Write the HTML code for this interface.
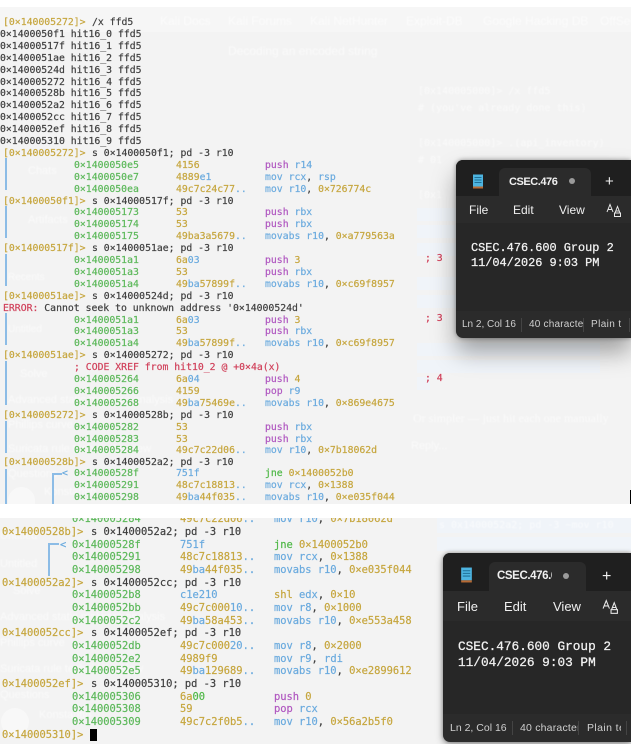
<!DOCTYPE html>
<html><head><meta charset="utf-8"><style>
html,body{margin:0;padding:0}
body{width:631px;height:744px;overflow:hidden;background:#fff;position:relative;font-family:"DejaVu Sans Mono","Liberation Mono",monospace}
#bg{position:absolute;left:0;top:7px;width:631px;height:737px;background:#f3f3f3}
#top{position:absolute;left:0;top:7px;width:631px;height:25px;background:#f6f6f6}
#band{position:absolute;left:0;top:504px;width:631px;height:14px;background:#fff}
.sec{position:absolute;left:0;width:631px;overflow:hidden;filter:blur(.3px);-webkit-text-stroke:.2px}
#s1{top:2px;height:502px;font-size:9.8px}
#s2{top:518px;height:226px;font-size:10.4px}
.l{position:absolute;left:0;width:631px;height:12px;line-height:12px;white-space:pre;color:#3f3f3f}
.l i{position:absolute;font-style:normal;top:0}
.p{color:#c6a63e}
#s1 .p{left:3px}#s1 .c{left:92px}#s1 .a{left:74px}#s1 .h{left:176px}#s1 .m{left:265px}
#s2 .p{left:2px}#s2 .c{left:91px}#s2 .a{left:72px}#s2 .h{left:180px}#s2 .m{left:274px}
.a{color:#5cb85a}.h{color:#c6a63e}.b{color:#6aaade}.u{color:#b058c0}.y{color:#c6a63e}.g{color:#50b848}.w{color:#3f3f3f}.r{color:#d0405a}
.bar{position:absolute;background:#8cbce6}
.gh{position:absolute;color:#fff;opacity:.6;white-space:pre;filter:blur(.5px);font-family:"Liberation Sans",sans-serif;font-size:11px}
.mono{font-family:"DejaVu Sans Mono",monospace;font-size:10px}
.row{position:absolute;background:#f0f4f9}
.np{position:absolute;background:#2b2b2b;color:#f0f0f0;font-family:"Liberation Sans",sans-serif;overflow:hidden;border-radius:7px 0 0 7px}
.np div,.np span,.np svg{position:absolute;white-space:pre}
.np div span{position:static}
.tb{left:0;top:0;right:0;background:#1f1f1f}
.tab{background:#2b2b2b;border-radius:6px 6px 0 0}
.ta{left:0;right:0;background:#272727}
.t{font-family:"Liberation Mono",monospace;color:#f2f2f2;-webkit-text-stroke:.25px #f2f2f2}
.dv{width:1px;background:#444}
.st{color:#cfcfcf}
.clip{overflow:hidden}
</style></head><body>
<div id="bg"></div><div id="top"></div>

<div class="gh" style="left:160px;top:14px;font-size:12px">Kali Docs</div>
<div class="gh" style="left:228px;top:14px;font-size:12px">Kali Forums</div>
<div class="gh" style="left:310px;top:14px;font-size:12px">Kali NetHunter</div>
<div class="gh" style="left:406px;top:14px;font-size:12px">Exploit-DB</div>
<div class="gh" style="left:483px;top:14px;font-size:12px">Google Hacking DB</div>
<div class="gh" style="left:600px;top:14px;font-size:12px">OffSec</div>
<div class="gh" style="left:228px;top:44px;font-size:12px">Decoding an encoded string</div>
<div class="gh mono" style="left:418px;top:86px">[0x140005000]&gt; /x ffd5</div>
<div class="gh mono" style="left:418px;top:103px"># (you've already done this)</div>
<div class="gh mono" style="left:418px;top:138px">[0x140005000]&gt; .(api_inventory)</div>
<div class="gh mono" style="left:418px;top:155px"># 01</div>
<div class="gh mono" style="left:418px;top:190px">[0x1</div>
<div class="row" style="left:417px;top:208px;width:39px;height:13px"></div>
<div class="row" style="left:417px;top:225px;width:39px;height:13px"></div>
<div class="row" style="left:417px;top:243px;width:39px;height:13px"></div>
<div class="row" style="left:417px;top:277px;width:39px;height:13px"></div>
<div class="row" style="left:417px;top:295px;width:39px;height:13px"></div>
<div class="row" style="left:417px;top:343px;width:183px;height:13px"></div>
<div class="row" style="left:417px;top:360px;width:183px;height:13px"></div>
<div class="row" style="left:417px;top:377px;width:13px;height:13px"></div>
<div class="gh" style="left:413px;top:411px;font-family:'Liberation Serif',serif;font-size:12px">Or simpler — just hit each one manually</div>
<div class="gh" style="left:411px;top:440px;font-size:11px">Reply...</div>
<div class="row" style="left:437px;top:518px;width:194px;height:15px"></div>
<div class="row" style="left:437px;top:537px;width:194px;height:14px"></div>
<div class="gh mono" style="left:439px;top:520px">s 0x1400052a2; pd -3 ~mov r10</div>
<div class="gh" style="left:28px;top:165px;font-size:11px">Chats</div>
<div class="gh" style="left:28px;top:214px;font-size:11px">Artifacts</div>
<div class="gh" style="left:8px;top:272px;font-size:10px">Recents</div>
<div class="gh" style="left:8px;top:324px;font-size:10px">Untitled</div>
<div class="gh" style="left:20px;top:368px;font-size:11px">Solve</div>
<div class="gh" style="left:8px;top:394px;font-size:11px">Advanced static malware analysis</div>
<div class="gh" style="left:8px;top:419px;font-size:11px">Phillips curve</div>
<div class="gh" style="left:8px;top:443px;font-size:11px">Suricata rule technical review</div>
<div class="gh" style="left:8px;top:468px;font-size:11px">Questions</div>
<div style="position:absolute;left:8px;top:487px;width:27px;height:17px;background:#f8f8f8;border-radius:14px 14px 0 0"></div>
<div class="gh" style="left:44px;top:486px;font-size:11px">Konstantin</div>
<div class="gh" style="left:0;top:530px;font-size:11px">Untitled</div>
<div class="gh" style="left:0;top:558px;font-size:11px">Untitled</div>
<div class="gh" style="left:13px;top:585px;font-size:11px">Solve</div>
<div class="gh" style="left:0;top:611px;font-size:11px">Advanced static malware analysis</div>
<div class="gh" style="left:0;top:637px;font-size:11px">Phillips curve</div>
<div class="gh" style="left:0;top:663px;font-size:11px">Suricata rule technical review</div>
<div class="gh" style="left:0;top:689px;font-size:11px">Questions</div>
<div style="position:absolute;left:1px;top:708px;width:28px;height:28px;background:#f8f8f8;border-radius:50%"></div>
<div class="gh" style="left:39px;top:709px;font-size:11px">Konstantin</div>

<div class="sec" id="s1">
<div class="bar" style="left:5px;top:156px;width:2px;height:32px"></div>
<div class="bar" style="left:5px;top:204px;width:2px;height:32px"></div>
<div class="bar" style="left:5px;top:252px;width:2px;height:32px"></div>
<div class="bar" style="left:5px;top:311px;width:2px;height:32px"></div>
<div class="bar" style="left:5px;top:359px;width:2px;height:44px"></div>
<div class="bar" style="left:5px;top:419px;width:2px;height:32px"></div>
<div class="bar" style="left:5px;top:467px;width:2px;height:35px"></div>
<div class="bar" style="left:52px;top:471px;width:2px;height:31px"></div>
<div class="bar" style="left:52px;top:471px;width:10px;height:1.5px"></div>

<div class="l" style="top:15px"><i class="p">[0×140005272]&gt;</i><i class="c">/x ffd5</i></div>
<div class="l" style="top:26.9px">0×1400050f1 hit16_0 ffd5</div>
<div class="l" style="top:38.8px">0×14000517f hit16_1 ffd5</div>
<div class="l" style="top:50.7px">0×1400051ae hit16_2 ffd5</div>
<div class="l" style="top:62.6px">0×14000524d hit16_3 ffd5</div>
<div class="l" style="top:74.5px">0×140005272 hit16_4 ffd5</div>
<div class="l" style="top:86.4px">0×14000528b hit16_5 ffd5</div>
<div class="l" style="top:98.3px">0×1400052a2 hit16_6 ffd5</div>
<div class="l" style="top:110.2px">0×1400052cc hit16_7 ffd5</div>
<div class="l" style="top:122.1px">0×1400052ef hit16_8 ffd5</div>
<div class="l" style="top:134px">0×140005310 hit16_9 ffd5</div>
<div class="l" style="top:145.9px"><i class="p">[0×140005272]&gt;</i><i class="c">s 0×1400050f1; pd -3 r10</i></div>
<div class="l" style="top:157.8px"><i class="a">0×1400050e5</i><i class="h">4156</i><i class="m"><span class="u">push</span> <span class="b">r14</span></i></div>
<div class="l" style="top:169.7px"><i class="a">0×1400050e7</i><i class="h">4889<span class="b">e1</span></i><i class="m"><span class="b">mov rcx</span>, <span class="b">rsp</span></i></div>
<div class="l" style="top:181.6px"><i class="a">0×1400050ea</i><i class="h">49c7c24c77<span class="b">..</span></i><i class="m"><span class="b">mov r10</span>, <span class="y">0×726774c</span></i></div>
<div class="l" style="top:193.5px"><i class="p">[0×1400050f1]&gt;</i><i class="c">s 0×14000517f; pd -3 r10</i></div>
<div class="l" style="top:205.4px"><i class="a">0×140005173</i><i class="h">53</i><i class="m"><span class="u">push</span> <span class="b">rbx</span></i></div>
<div class="l" style="top:217.3px"><i class="a">0×140005174</i><i class="h">53</i><i class="m"><span class="u">push</span> <span class="b">rbx</span></i></div>
<div class="l" style="top:229.2px"><i class="a">0×140005175</i><i class="h">49ba3a5679<span class="b">..</span></i><i class="m"><span class="b">movabs r10</span>, <span class="y">0×a779563a</span></i></div>
<div class="l" style="top:241.1px"><i class="p">[0×14000517f]&gt;</i><i class="c">s 0×1400051ae; pd -3 r10</i></div>
<div class="l" style="top:253px"><i class="a">0×1400051a1</i><i class="h">6a<span class="b">03</span></i><i class="m"><span class="u">push</span> <span class="y">3</span></i></div>
<div class="l" style="top:264.9px"><i class="a">0×1400051a3</i><i class="h">53</i><i class="m"><span class="u">push</span> <span class="b">rbx</span></i></div>
<div class="l" style="top:276.8px"><i class="a">0×1400051a4</i><i class="h">49<span class="b">ba</span>57899f<span class="b">..</span></i><i class="m"><span class="b">movabs r10</span>, <span class="y">0×c69f8957</span></i></div>
<div class="l" style="top:288.7px"><i class="p">[0×1400051ae]&gt;</i><i class="c">s 0×14000524d; pd -3 r10</i></div>
<div class="l" style="top:300.6px"><i style="left:3px"><span class="r">ERROR:</span> Cannot seek to unknown address '0×14000524d'</i></div>
<div class="l" style="top:312.5px"><i class="a">0×1400051a1</i><i class="h">6a<span class="b">03</span></i><i class="m"><span class="u">push</span> <span class="y">3</span></i></div>
<div class="l" style="top:324.4px"><i class="a">0×1400051a3</i><i class="h">53</i><i class="m"><span class="u">push</span> <span class="b">rbx</span></i></div>
<div class="l" style="top:336.3px"><i class="a">0×1400051a4</i><i class="h">49<span class="b">ba</span>57899f<span class="b">..</span></i><i class="m"><span class="b">movabs r10</span>, <span class="y">0×c69f8957</span></i></div>
<div class="l" style="top:348.2px"><i class="p">[0×1400051ae]&gt;</i><i class="c">s 0×140005272; pd -3 r10</i></div>
<div class="l" style="top:360.1px"><i style="left:74px" class="r">; CODE XREF from hit10_2 @ +0×4a(x)</i></div>
<div class="l" style="top:372px"><i class="a">0×140005264</i><i class="h">6a<span class="b">04</span></i><i class="m"><span class="u">push</span> <span class="y">4</span></i></div>
<div class="l" style="top:383.9px"><i class="a">0×140005266</i><i class="h">4159</i><i class="m"><span class="u">pop</span> <span class="b">r9</span></i></div>
<div class="l" style="top:395.8px"><i class="a">0×140005268</i><i class="h">49<span class="b">ba</span>75469e<span class="b">..</span></i><i class="m"><span class="b">movabs r10</span>, <span class="y">0×869e4675</span></i></div>
<div class="l" style="top:407.7px"><i class="p">[0×140005272]&gt;</i><i class="c">s 0×14000528b; pd -3 r10</i></div>
<div class="l" style="top:419.6px"><i class="a">0×140005282</i><i class="h">53</i><i class="m"><span class="u">push</span> <span class="b">rbx</span></i></div>
<div class="l" style="top:431.5px"><i class="a">0×140005283</i><i class="h">53</i><i class="m"><span class="u">push</span> <span class="b">rbx</span></i></div>
<div class="l" style="top:443.4px"><i class="a">0×140005284</i><i class="h">49c7c22d06<span class="b">..</span></i><i class="m"><span class="b">mov r10</span>, <span class="y">0×7b18062d</span></i></div>
<div class="l" style="top:455.3px"><i class="p">[0×14000528b]&gt;</i><i class="c">s 0×1400052a2; pd -3 r10</i></div>
<div class="l" style="top:466.2px"><i style="left:62px" class="b">&lt;</i><i class="a">0×14000528f</i><i class="h"><span class="b">751f</span></i><i class="m"><span class="g">jne</span> <span class="y">0×1400052b0</span></i></div>
<div class="l" style="top:478.1px"><i class="a">0×140005291</i><i class="h">48c7c18813<span class="b">..</span></i><i class="m"><span class="b">mov rcx</span>, <span class="y">0×1388</span></i></div>
<div class="l" style="top:490px"><i class="a">0×140005298</i><i class="h">49<span class="b">ba</span>44f035<span class="b">..</span></i><i class="m"><span class="b">movabs r10</span>, <span class="y">0×e035f044</span></i></div>
</div>

<div class="sec" id="s2">
<div class="bar" style="left:48px;top:25px;width:2px;height:33px"></div>
<div class="bar" style="left:48px;top:25px;width:11px;height:1.5px"></div>
<div class="l" style="top:-5px"><i class="a">0×140005284</i><i class="h">49c7c22d06<span class="b">..</span></i><i class="m"><span class="b">mov r10</span>, <span class="y">0×7b18062d</span></i></div>
<div class="l" style="top:8px"><i class="p" style="left:2px">0×14000528b]&gt;</i><i class="c">s 0×1400052a2; pd -3 r10</i></div>
<div class="l" style="top:20.5px"><i style="left:60px" class="b">&lt;</i><i class="a">0×14000528f</i><i class="h"><span class="b">751f</span></i><i class="m"><span class="g">jne</span> <span class="y">0×1400052b0</span></i></div>
<div class="l" style="top:33.2px"><i class="a">0×140005291</i><i class="h">48c7c18813<span class="b">..</span></i><i class="m"><span class="b">mov rcx</span>, <span class="y">0×1388</span></i></div>
<div class="l" style="top:45.9px"><i class="a">0×140005298</i><i class="h">49<span class="b">ba</span>44f035<span class="b">..</span></i><i class="m"><span class="b">movabs r10</span>, <span class="y">0×e035f044</span></i></div>
<div class="l" style="top:58.6px"><i class="p">0×1400052a2]&gt;</i><i class="c">s 0×1400052cc; pd -3 r10</i></div>
<div class="l" style="top:71.3px"><i class="a">0×1400052b8</i><i class="h"><span class="b">c1e210</span></i><i class="m"><span class="y">shl</span> <span class="b">edx</span>, <span class="y">0×10</span></i></div>
<div class="l" style="top:84px"><i class="a">0×1400052bb</i><i class="h">49c7c000<span class="b">10</span><span class="b">..</span></i><i class="m"><span class="b">mov r8</span>, <span class="y">0×1000</span></i></div>
<div class="l" style="top:96.6px"><i class="a">0×1400052c2</i><i class="h">49<span class="b">ba</span>58a453<span class="b">..</span></i><i class="m"><span class="b">movabs r10</span>, <span class="y">0×e553a458</span></i></div>
<div class="l" style="top:109.3px"><i class="p">0×1400052cc]&gt;</i><i class="c">s 0×1400052ef; pd -3 r10</i></div>
<div class="l" style="top:122px"><i class="a">0×1400052db</i><i class="h">49c7c000<span class="b">20</span><span class="b">..</span></i><i class="m"><span class="b">mov r8</span>, <span class="y">0×2000</span></i></div>
<div class="l" style="top:134.6px"><i class="a">0×1400052e2</i><i class="h">4989f9</i><i class="m"><span class="b">mov r9</span>, <span class="b">rdi</span></i></div>
<div class="l" style="top:147.3px"><i class="a">0×1400052e5</i><i class="h">49<span class="b">ba</span>129689<span class="b">..</span></i><i class="m"><span class="b">movabs r10</span>, <span class="y">0×e2899612</span></i></div>
<div class="l" style="top:160px"><i class="p">0×1400052ef]&gt;</i><i class="c">s 0×140005310; pd -3 r10</i></div>
<div class="l" style="top:172.6px"><i class="a">0×140005306</i><i class="h">6a<span class="g">00</span></i><i class="m"><span class="u">push</span> <span class="y">0</span></i></div>
<div class="l" style="top:185.3px"><i class="a">0×140005308</i><i class="h">59</i><i class="m"><span class="u">pop</span> <span class="b">rcx</span></i></div>
<div class="l" style="top:198px"><i class="a">0×140005309</i><i class="h">49c7c2f0b5<span class="b">..</span></i><i class="m"><span class="b">mov r10</span>, <span class="y">0×56a2b5f0</span></i></div>
<div class="l" style="top:210.6px"><i class="p">0×140005310]&gt;</i></div>
<div style="position:absolute;left:90px;top:211px;width:7px;height:12px;background:#000"></div>
</div>

<div id="band"></div>
<div style="position:absolute;left:630px;top:490px;width:1px;height:14px;background:#000"></div>

<div class="sec" style="top:0;height:504px;font-size:9.8px">
<div class="l" style="top:253px"><i class="r" style="left:425px">; 3</i></div>
<div class="l" style="top:313px"><i class="r" style="left:425px">; 3</i></div>
<div class="l" style="top:373px"><i class="r" style="left:425px">; 4</i></div>
</div>

<!-- Notepad 1 -->
<div class="np" style="left:456px;top:160px;width:175px;height:178px;box-shadow:0 14px 24px rgba(0,0,0,.35),0 0 5px rgba(0,0,0,.4)">
  <div class="tb" style="height:36px"></div>
  <div class="tab" style="left:43px;top:8px;width:92px;height:28px"></div>
  <svg style="left:16px;top:14px" width="12" height="15" viewBox="0 0 12 15"><rect x="1" y="0.5" width="10" height="12" fill="#4db4e0"/><path d="M2.5 3.5h7M2.5 6h7M2.5 8.500h7" stroke="#1f6f96" stroke-width="1"/><rect x="1" y="12.500" width="10" height="2" fill="#b86a34"/></svg>
  <div class="clip" style="left:53px;top:14px;width:49px;height:16px;font-size:11px;font-weight:bold;line-height:16px;letter-spacing:-.45px">CSEC.476.600</div>
  <div style="left:113px;top:18px;width:6px;height:6px;border-radius:50%;background:#9a9a9a"></div>
  <div style="left:149px;top:13px;font-size:15px;line-height:18px">+</div>
  <div style="left:13px;top:43px;font-size:12px;line-height:15px">File</div>
  <div style="left:57px;top:43px;font-size:12px;line-height:15px">Edit</div>
  <div style="left:103px;top:43px;font-size:12px;line-height:15px">View</div>
  <svg style="left:150px;top:43px" width="16" height="16" viewBox="0 0 16 16" fill="none" stroke="#e8e8e8" stroke-width="1"><path d="M1 9L4 1.500L7 9M2 6.500h4"/><path d="M9 10L11.500 3.500L14 10M9.500 8h4"/><rect x="8.500" y="10" width="6" height="3.500"/></svg>
  <div class="ta" style="top:63px;height:88px"></div>
  <div class="t" style="left:15px;top:81px;font-size:11.9px;line-height:15px">CSEC.476.600 Group 2
11/04/2026 9:03 PM</div>
  <div class="st" style="left:6px;top:158px;font-size:10px;line-height:14px">Ln 2, Col 16</div>
  <div class="dv" style="left:65px;top:158px;height:14px"></div>
  <div class="st clip" style="left:73px;top:158px;width:54px;height:14px;font-size:10px;line-height:14px;letter-spacing:.2px">40 characters</div>
  <div class="dv" style="left:127px;top:158px;height:14px"></div>
  <div class="st clip" style="left:135px;top:158px;width:31px;height:14px;font-size:10px;line-height:14px;letter-spacing:.4px">Plain text</div>
  <div class="dv" style="left:173px;top:158px;height:14px"></div>
</div>

<!-- Notepad 2 -->
<div class="np" style="left:443px;top:553px;width:188px;height:189px;box-shadow:0 3px 8px rgba(0,0,0,.3),0 0 4px rgba(0,0,0,.35)">
  <div class="tb" style="height:38px"></div>
  <div class="tab" style="left:46px;top:9px;width:97px;height:29px"></div>
  <svg style="left:17px;top:14px" width="13" height="16" viewBox="0 0 12 15"><rect x="1" y="0.5" width="10" height="12" fill="#4db4e0"/><path d="M2.5 3.5h7M2.5 6h7M2.5 8.500h7" stroke="#1f6f96" stroke-width="1"/><rect x="1" y="12.500" width="10" height="2" fill="#b86a34"/></svg>
  <div class="clip" style="left:54px;top:15px;width:55px;height:16px;font-size:11.5px;font-weight:bold;line-height:16px;letter-spacing:-.4px">CSEC.476.600</div>
  <div style="left:120px;top:20px;width:6px;height:6px;border-radius:50%;background:#9a9a9a"></div>
  <div style="left:159px;top:14px;font-size:16px;line-height:19px">+</div>
  <div style="left:14px;top:46px;font-size:13px;line-height:16px">File</div>
  <div style="left:61px;top:46px;font-size:13px;line-height:16px">Edit</div>
  <div style="left:110px;top:46px;font-size:13px;line-height:16px">View</div>
  <svg style="left:159px;top:46px" width="17" height="17" viewBox="0 0 16 16" fill="none" stroke="#e8e8e8" stroke-width="1"><path d="M1 9L4 1.500L7 9M2 6.500h4"/><path d="M9 10L11.500 3.500L14 10M9.500 8h4"/><rect x="8.500" y="10" width="6" height="3.500"/></svg>
  <div class="ta" style="top:68px;height:93px"></div>
  <div class="t" style="left:15px;top:86px;font-size:12.75px;line-height:16px">CSEC.476.600 Group 2
11/04/2026 9:03 PM</div>
  <div class="st" style="left:7px;top:168px;font-size:10.5px;line-height:14px">Ln 2, Col 16</div>
  <div class="dv" style="left:69px;top:168px;height:14px"></div>
  <div class="st clip" style="left:77px;top:168px;width:58px;height:14px;font-size:10.5px;line-height:14px;letter-spacing:.2px">40 characters</div>
  <div class="dv" style="left:135px;top:168px;height:14px"></div>
  <div class="st clip" style="left:144px;top:168px;width:34px;height:14px;font-size:10.5px;line-height:14px;letter-spacing:.4px">Plain text</div>
  <div class="dv" style="left:183px;top:168px;height:14px"></div>
</div>
</body></html>
